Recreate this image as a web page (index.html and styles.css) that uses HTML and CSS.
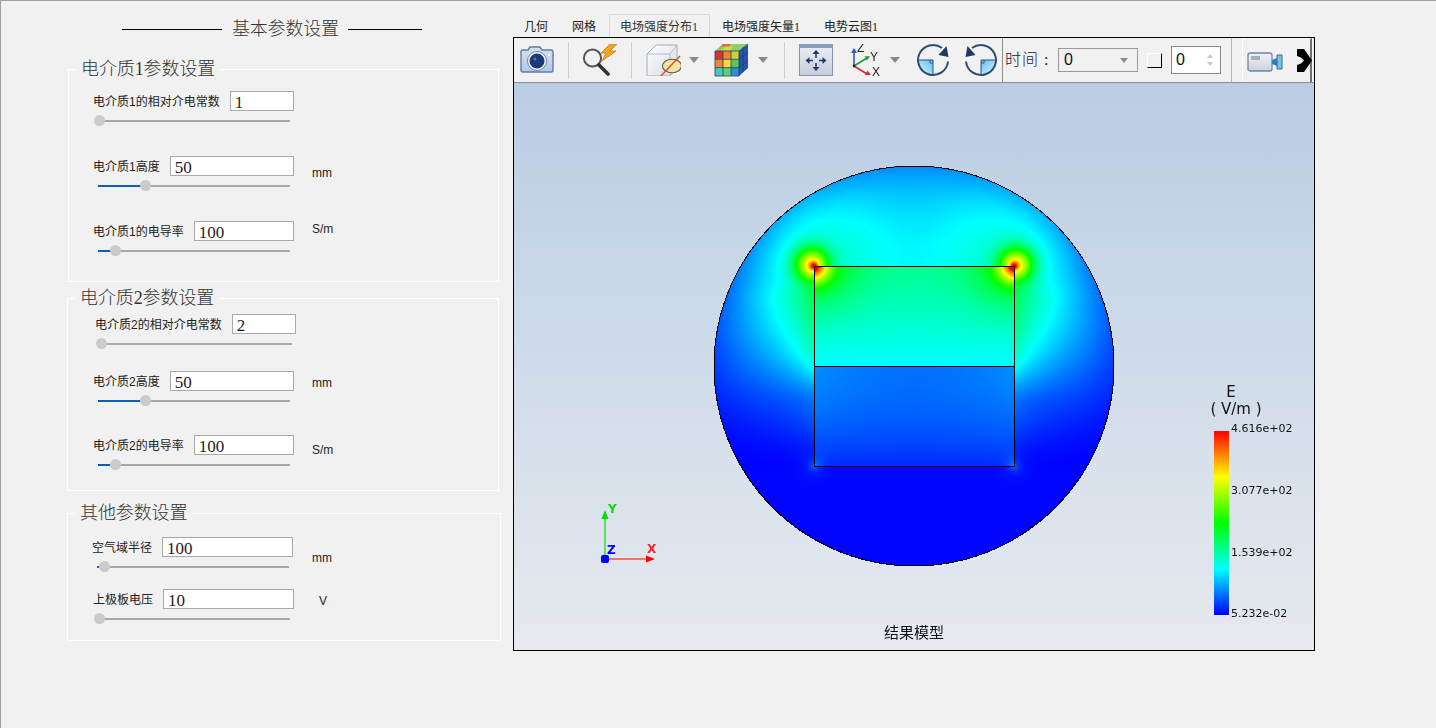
FILE: index.html
```html
<!DOCTYPE html>
<html lang="zh-CN">
<head>
<meta charset="utf-8">
<title>基本参数设置</title>
<link rel="stylesheet" href="styles.css">
</head>
<body>
<div class="app">
  <aside class="params">
    <div class="params-title"><i class="rule rule--left"></i><span>基本参数设置</span><i class="rule rule--right"></i></div>

    <fieldset class="group group--one">
      <legend class="legend">电介质1参数设置</legend>
      <div class="group-body body--one">
        <div class="field gap-29">
          <div class="row"><span class="label">电介质1的相对介电常数</span><div class="input">1</div></div>
          <div class="slider"><b class="handle" style="left:-4px"></b></div>
        </div>
        <div class="field gap-29">
          <div class="row"><span class="label">电介质1高度</span><div class="input">50</div><span class="unit unit--down7">mm</span></div>
          <div class="slider"><b class="fill" style="width:47px"></b><b class="handle" style="left:42px"></b></div>
        </div>
        <div class="field">
          <div class="row"><span class="label">电介质1的电导率</span><div class="input">100</div><span class="unit unit--up2">S/m</span></div>
          <div class="slider"><b class="fill" style="width:17px"></b><b class="handle" style="left:12px"></b></div>
        </div>
      </div>
    </fieldset>

    <fieldset class="group group--two">
      <legend class="legend legend--tight">电介质2参数设置</legend>
      <div class="group-body body--two">
        <div class="field field--shift2 gap-21">
          <div class="row"><span class="label">电介质2的相对介电常数</span><div class="input">2</div></div>
          <div class="slider"><b class="handle" style="left:-4px"></b></div>
        </div>
        <div class="field field--shift0 gap-28">
          <div class="row"><span class="label">电介质2高度</span><div class="input">50</div><span class="unit unit--down2">mm</span></div>
          <div class="slider"><b class="fill" style="width:47px"></b><b class="handle" style="left:42px"></b></div>
        </div>
        <div class="field field--shift0">
          <div class="row"><span class="label">电介质2的电导率</span><div class="input">100</div><span class="unit unit--down5">S/m</span></div>
          <div class="slider"><b class="fill" style="width:17px"></b><b class="handle" style="left:12px"></b></div>
        </div>
      </div>
    </fieldset>

    <fieldset class="group group--three">
      <legend class="legend legend--tight">其他参数设置</legend>
      <div class="group-body body--three">
        <div class="field field--shift-1 gap-16">
          <div class="row"><span class="label">空气域半径</span><div class="input">100</div><span class="unit unit--down11 unit--far1">mm</span></div>
          <div class="slider"><b class="fill" style="width:2px"></b><b class="handle" style="left:2px"></b></div>
        </div>
        <div class="field field--shift0">
          <div class="row"><span class="label">上极板电压</span><div class="input">10</div><span class="unit unit--down2 unit--far2">V</span></div>
          <div class="slider"><b class="handle" style="left:-4px"></b></div>
        </div>
      </div>
    </fieldset>
  </aside>

  <section class="workspace">
    <nav class="tabs">
      <span class="tab">几何</span>
      <span class="tab">网格</span>
      <span class="tab tab--active">电场强度分布1</span>
      <span class="tab">电场强度矢量1</span>
      <span class="tab">电势云图1</span>
    </nav>
    <div class="viewer">
      <div class="toolbar">
        <svg class="icon icon--a" viewBox="0 0 36 32" width="36" height="32">
          <defs><linearGradient id="camBody" x1="0" y1="0" x2="0" y2="1"><stop offset="0" stop-color="#d4e0f0"/><stop offset="1" stop-color="#b4c8e2"/></linearGradient></defs>
          <path d="M4 6h5l2-3h10l2 3h9a2 2 0 0 1 2 2v18a2 2 0 0 1-2 2H4a2 2 0 0 1-2-2V8a2 2 0 0 1 2-2z" fill="url(#camBody)" stroke="#5f7ea6" stroke-width="1.4"/>
          <circle cx="18" cy="17" r="9.500" fill="#eef3fa" stroke="#6a88b0"/>
          <circle cx="18" cy="17" r="7.500" fill="#1d3a78"/>
          <circle cx="16" cy="15" r="1.500" fill="#5a7ab4"/>
          <circle cx="30" cy="11" r="1.200" fill="#ffffff"/>
        </svg>
        <i class="sep sep--13"></i>
        <svg class="icon icon--a" viewBox="0 0 36 32" width="36" height="32">
          <circle cx="10.5" cy="14" r="8.6" fill="#eef1f5" stroke="#555" stroke-width="2"/>
          <path d="M17 21l9 9" stroke="#333" stroke-width="3.6" stroke-linecap="round"/>
          <path d="M28 0L19 9h5l-4 8 14-10h-6l7-7z" fill="#f5a524" stroke="#cf7a10" stroke-width=".8"/>
        </svg>
        <i class="sep sep--13"></i>
        <svg class="icon icon--a" viewBox="0 0 36 32" width="36" height="32">
          <defs><linearGradient id="boxFace" x1="0" y1="0" x2="1" y2="1"><stop offset="0" stop-color="#ffffff"/><stop offset="1" stop-color="#d5d9e0"/></linearGradient></defs>
          <path d="M2 10l9-9h21v22l-7 9H2z" fill="url(#boxFace)" stroke="#a7adb8"/>
          <path d="M2 10h23v22M25 10l7-9" fill="none" stroke="#b4bac4"/>
          <ellipse cx="27" cy="22" rx="9.5" ry="6.8" fill="#f3e4a3" stroke="#5a5a5a" stroke-width="1.1"/>
          <path d="M15 33L35 12" stroke="#d8552b" stroke-width="1.5"/>
        </svg>
        <i class="caret caret--8"></i>
        <svg class="icon icon--b" viewBox="0 0 36 34" width="36" height="34">
          <path d="M25 8l9-7v24l-9 8z" fill="#1f58b0"/>
          <path d="M1 8l8-7h25l-9 7z" fill="#8fcf6a"/>
          <path d="M12 3.500h7l-3 4H7z" fill="#d8d850"/>
          <path d="M9 1h8l-2 2.500H6z" fill="#e86a3c"/>
          <rect x="1" y="8" width="8" height="8.300" fill="#d8352a"/>
          <rect x="9" y="8" width="8" height="8.300" fill="#ef8a2c"/>
          <rect x="17" y="8" width="8" height="8.300" fill="#c7d43e"/>
          <rect x="1" y="16.300" width="8" height="8.300" fill="#ef8a2c"/>
          <rect x="9" y="16.300" width="8" height="8.300" fill="#f3d93a"/>
          <rect x="17" y="16.300" width="8" height="8.300" fill="#58c860"/>
          <rect x="1" y="24.600" width="8" height="8.300" fill="#49c8b4"/>
          <rect x="9" y="24.600" width="8" height="8.300" fill="#5fd078"/>
          <rect x="17" y="24.600" width="8" height="8.300" fill="#2f8ed8"/>
          <path d="M1 8h24v25H1zM9 8v25M17 8v25M1 16.300h24M1 24.600h24M25 8l9-7M25 16l9-7M25 24.600l9-7M29 4.500v24.500" fill="none" stroke="#2b3c58" stroke-width=".8"/>
        </svg>
        <i class="caret caret--8"></i>
        <i class="sep sep--16"></i>
        <svg class="icon icon--a" viewBox="0 0 36 32" width="36" height="32">
          <defs><linearGradient id="fitBody" x1="0" y1="0" x2="0" y2="1"><stop offset="0" stop-color="#eef1f6"/><stop offset="1" stop-color="#c4cbd9"/></linearGradient></defs>
          <rect x="1.500" y=".500" width="33" height="31" fill="url(#fitBody)" stroke="#8593ad"/>
          <rect x="1" y="0" width="34" height="4" fill="#8c9dbd"/>
          <path d="M18 9v5M18 19v5M10 16.500h5M21 16.500h5" stroke="#1f3a64" stroke-width="1.500"/>
          <path d="M18 6l3.500 4h-7zM18 27l3.500-4h-7zM7.500 16.500l4-3.500v7zM28.500 16.500l-4-3.500v7z" fill="#1f3a64"/>
        </svg>
        <svg class="icon icon--c" viewBox="0 0 36 32" width="36" height="32">
          <path d="M4 22V7" stroke="#2a5fc0" stroke-width="1.600"/>
          <path d="M4 4l3 5H1z" fill="#2a5fc0"/>
          <path d="M4 22l13-8" stroke="#1f9a3c" stroke-width="1.600"/>
          <path d="M20 12l-5.500.5 2.500 4z" fill="#1f9a3c"/>
          <path d="M4 22l13 8" stroke="#e0282c" stroke-width="1.600"/>
          <path d="M21 31l-6 0 2.500-4.500z" fill="#e0282c"/>
          <circle cx="4" cy="22" r="1.400" fill="#222"/>
          <text class="axis-letter" x="7" y="8">Z</text>
          <text class="axis-letter" x="20" y="17">Y</text>
          <text class="axis-letter" x="22" y="32">X</text>
        </svg>
        <i class="caret caret--4"></i>
        <svg class="icon icon--d" viewBox="0 0 36 36" width="36" height="36">
          <defs><linearGradient id="rotFill" x1="1" y1="0" x2="0" y2="1"><stop offset="0" stop-color="#5dbdee"/><stop offset="1" stop-color="#e8f6fd"/></linearGradient></defs>
          <path d="M18 18H3a15 15 0 0 0 15 15z" fill="url(#rotFill)" stroke="#2c4e74" stroke-width="1"/>
          <path d="M15 18v3h3" fill="none" stroke="#2c4e74" stroke-width=".8"/>
          <path d="M33 19.500A15 15 0 1 1 27 6" fill="none" stroke="#2c4e74" stroke-width="2"/>
          <path d="M33.500 15l-10-2 8-9z" fill="#1d3a64"/>
        </svg>
        <svg class="icon icon--e icon--flip" viewBox="0 0 36 36" width="36" height="36">
          <path d="M18 18H3a15 15 0 0 0 15 15z" fill="url(#rotFill)" stroke="#2c4e74" stroke-width="1"/>
          <path d="M15 18v3h3" fill="none" stroke="#2c4e74" stroke-width=".8"/>
          <path d="M33 19.500A15 15 0 1 1 27 6" fill="none" stroke="#2c4e74" stroke-width="2"/>
          <path d="M33.500 15l-10-2 8-9z" fill="#1d3a64"/>
        </svg>
        <i class="sep sep--dark"></i>
        <span class="time-label">时间 :</span>
        <div class="combo"><span>0</span><i class="caret caret--combo"></i></div>
        <i class="mini-button"></i>
        <div class="spin"><span>0</span><span class="spin-arrows"><i class="spin-up"></i><i class="spin-down"></i></span></div>
        <i class="sep sep--full"></i>
        <div class="raised">
          <svg class="icon-video" viewBox="0 0 37 24" width="37" height="24">
            <defs><linearGradient id="vidBody" x1="0" y1="0" x2="0" y2="1"><stop offset="0" stop-color="#eef1f6"/><stop offset="1" stop-color="#cdd3de"/></linearGradient></defs>
            <rect x="1" y="4" width="24" height="18" rx="2" fill="url(#vidBody)" stroke="#6d87a8" stroke-width="1.300"/>
            <rect x="4" y="7" width="9" height="4" fill="#a9aeb8"/>
            <path d="M25 11l5-2v8l-5-2z" fill="#2f7fb8"/>
            <path d="M30 6h5v14h-5z" fill="#7fc0e0" stroke="#2f6f9f"/>
          </svg>
          <svg class="icon-more" viewBox="0 0 15 23" width="15" height="23">
            <path d="M0 0h7l8 11.500-8 11.500H0v-7l4-1.500 3-3-3-3-4-1.500z" fill="#000"/>
          </svg>
        </div>
      </div>

      <div class="plot">
        <canvas id="field" class="field-canvas" width="800" height="567"></canvas>

        <svg class="triad" viewBox="0 0 90 70" width="90" height="70">
          <path d="M23 59V17" stroke="#00e000" stroke-width="1.200"/>
          <path d="M23 10l3.500 9h-7z" fill="#00e000"/>
          <path d="M23 59h44" stroke="#ff0000" stroke-width="1.200"/>
          <path d="M73 59l-9 3.500v-7z" fill="#ff0000"/>
          <rect x="19" y="55" width="8" height="8" rx="2" fill="#0000ff"/>
          <text class="triad-letter triad-y" x="26" y="13">Y</text>
          <text class="triad-letter triad-x" x="65" y="53">X</text>
          <text class="triad-letter triad-z" x="25" y="54">Z</text>
        </svg>

        <div class="legend-bar">
          <div class="legend-title"><span class="legend-e">E</span><br>( V/m )</div>
          <div class="bar"></div>
          <span class="tick tick--1">4.616e+02</span>
          <span class="tick tick--2">3.077e+02</span>
          <span class="tick tick--3">1.539e+02</span>
          <span class="tick tick--4">5.232e-02</span>
        </div>
        <div class="caption">结果模型</div>
      </div>
    </div>
  </section>
</div>
<script src="app.js"></script>
</body>
</html>
```
FILE: styles.css
```css
* { box-sizing: border-box; }
html, body { margin: 0; padding: 0; }
body {
  width: 1436px;
  height: 728px;
  overflow: hidden;
  background: #f1f1f1;
  font-family: "Liberation Sans", "Noto Sans CJK SC", sans-serif;
  color: #222;
}
.app {
  display: flex;
  width: 1436px;
  height: 728px;
  border-left: 1px solid #a0a0a0;
  border-top: 1px solid #a0a0a0;
}
.params {
  width: 511px;
  flex: none;
  padding-top: 16px;
}
.params-title {
  display: flex;
  align-items: center;
  height: 24px;
  margin-bottom: 18px;
  font: 300 18px/24px "Liberation Serif", "Noto Sans CJK SC", serif;
  letter-spacing: -.2px;
  color: #333;
}
.rule { display: block; height: 1px; background: #000; }
.rule--left { width: 100px; margin: 0 10px 0 121px; }
.rule--right { width: 74px; margin-left: 9px; }

.group {
  margin: 0;
  padding: 0;
  min-width: 0;
  border: 1px solid #fff;
}
.group--one { width: 431px; margin-left: 67px; }
.group--two { width: 432px; margin-left: 66px; margin-top: 6px; }
.group--three { width: 434px; margin-left: 66px; margin-top: 12px; }
.legend {
  margin-left: 7px;
  padding: 0 5px;
  height: 20px;
  font: 300 18px/20px "Liberation Serif", "Noto Sans CJK SC", serif;
  letter-spacing: -.1px;
  color: #333;
}
.legend--tight { padding: 0 5px 0 5px; }
.group-body { display: flex; flex-direction: column; }
.body--one { padding: 12px 0 24px 25px; }
.body--two { padding: 6px 0 19px 26px; }
.body--three { padding: 14px 0 15px 26px; }

.field { display: flex; flex-direction: column; width: 200px; }
.field--shift2 { margin-left: 2px; }
.field--shift-1 { margin-left: -1px; }
.field--shift0 { margin-left: 0; }
.gap-29 { margin-bottom: 29px; }
.gap-28 { margin-bottom: 28px; }
.gap-21 { margin-bottom: 21px; }
.gap-16 { margin-bottom: 16px; }

.row { display: flex; align-items: center; height: 20px; }
.label { font-size: 12px; line-height: 20px; margin: 2px 10px 0 -1px; white-space: nowrap; color: #222; }
.input {
  flex: 1;
  height: 20px;
  padding-left: 4px;
  background: #fff;
  border: 1px solid #a9a9a9;
  font: 17px/21px "Liberation Serif", serif;
  color: #2a1a20;
}
.unit { flex: none; width: 0; font-size: 12px; line-height: 14px; margin-left: 18px; margin-right: -18px; white-space: nowrap; color: #222; }
.unit--far1 { margin-left: 19px; margin-right: -19px; }
.unit--far2 { margin-left: 25px; margin-right: -25px; }
.unit--down7 { margin-top: 14px; }
.unit--up2 { margin-bottom: 4px; }
.unit--down2 { margin-top: 4px; }
.unit--down5 { margin-top: 10px; }
.unit--down11 { margin-top: 22px; }

.slider {
  position: relative;
  width: 192px;
  height: 2px;
  margin: 9px 0 5px 4px;
  background: #a9a9a9;
}
.fill { position: absolute; left: 0; top: 0; height: 2px; background: #0a62b8; }
.handle {
  position: absolute;
  top: -5px;
  width: 11px;
  height: 11px;
  border-radius: 50%;
  background: #cbcbcb;
}

.workspace { flex: none; width: 803px; padding-top: 13px; }
.tabs { display: flex; height: 23px; }
.tab {
  padding: 0 11px;
  font: 12px/24px "Liberation Serif", "Noto Sans CJK SC", serif;
  color: #222;
  border: 1px solid transparent;
  border-bottom: 0;
}
.tab--active { border-color: #d9d9d9; color: #333; margin-left: 1px; padding-left: 10px; }

.viewer {
  display: flex;
  flex-direction: column;
  width: 802px;
  height: 614px;
  margin-left: 1px;
  border: 1px solid #000;
}
.toolbar {
  position: relative;
  display: flex;
  align-items: center;
  flex: none;
  height: 45px;
  background: #f1f1f1;
  border-bottom: 1px solid #8c8c8c;
}
.icon { flex: none; filter: blur(.3px); }
.icon--a { margin-left: 13px; }
.toolbar > .icon--a:first-child { margin-left: 5px; }
.icon--b { margin-left: 15px; }
.icon--c { margin-left: 16px; }
.icon--d { margin-left: 15px; }
.icon--e { margin-left: 12px; }
.icon--flip { transform: scaleX(-1); }
.axis-letter { font: 12px "Liberation Sans", sans-serif; fill: #222; }

.sep { flex: none; display: block; width: 1px; height: 37px; background: #d0d0d0; }
.sep--13 { margin-left: 13px; }
.sep--16 { margin-left: 16px; }
.sep--dark { margin-left: 3px; height: 44px; background: #8c8c8c; }
.sep--full { margin-left: 10px; height: 44px; background: #b5b5b5; }

.caret {
  flex: none;
  display: block;
  width: 0;
  height: 0;
  border-left: 5.500px solid transparent;
  border-right: 5.500px solid transparent;
  border-top: 6px solid #8a8a8a;
}
.caret--8 { margin-left: 8px; }
.caret--4 { margin-left: 4px; }
.caret--combo { margin-left: auto; margin-right: 9px; border-left-width: 4.500px; border-right-width: 4.500px; border-top-width: 5px; }

.time-label {
  flex: none;
  width: 48px;
  margin-left: 2px;
  font: 300 16px/20px "Liberation Serif", "Noto Sans CJK SC", serif;
  letter-spacing: 1px;
  color: #223;
}
.combo {
  flex: none;
  display: flex;
  align-items: center;
  width: 80px;
  height: 24px;
  margin-left: 5px;
  padding-left: 5px;
  border: 1px solid #9a9a9a;
  font: 16px "Liberation Sans", sans-serif;
  color: #111;
}
.mini-button {
  flex: none;
  display: block;
  width: 15px;
  height: 15px;
  margin-left: 9px;
  border-right: 1px solid #000;
  border-bottom: 1px solid #000;
  border-left: 1px solid #fff;
  border-top: 1px solid #fff;
}
.spin {
  flex: none;
  display: flex;
  align-items: center;
  width: 50px;
  height: 28px;
  margin-left: 9px;
  padding-left: 4px;
  background: #fff;
  border: 1px solid #888;
  font: 16px "Liberation Sans", sans-serif;
  color: #111;
}
.spin-arrows { display: flex; flex-direction: column; gap: 4px; margin-left: auto; margin-right: 7px; }
.spin-up, .spin-down {
  display: block;
  width: 0;
  height: 0;
  border-left: 3.500px solid transparent;
  border-right: 3.500px solid transparent;
}
.spin-up { border-bottom: 4px solid #c8c8c8; }
.spin-down { border-top: 4px solid #c8c8c8; }

.raised {
  flex: none;
  display: flex;
  align-items: center;
  width: 70px;
  height: 44px;
  margin-left: 10px;
  border-left: 1px solid #fff;
  border-top: 1px solid #fff;
  border-right: 2px solid #707070;
}
.icon-video { flex: none; margin-left: 4px; filter: blur(.3px); }
.icon-more { flex: none; margin-left: 13px; margin-top: -1px; filter: blur(.7px); }

.plot {
  position: relative;
  flex: 1;
  background: linear-gradient(180deg, #b9cde4 0%, #e7eaef 100%);
  overflow: hidden;
}
.field-canvas { position: absolute; left: 0; top: 0; }
.triad { position: absolute; left: 68px; top: 417px; }
.triad-letter { font: bold 12px "DejaVu Sans", sans-serif; }
.triad-y { fill: #00e000; }
.triad-x { fill: #ff2020; }
.triad-z { fill: #0000ff; }

.legend-bar { position: absolute; left: 690px; top: 301px; width: 100px; height: 240px; }
.legend-title {
  position: absolute;
  left: 0;
  top: 0;
  width: 64px;
  font: 15px/17px "DejaVu Sans", sans-serif;
  text-align: center;
  color: #111;
  white-space: nowrap;
}
.legend-e { margin-right: 10px; }
.bar {
  position: absolute;
  left: 10px;
  top: 47px;
  width: 15px;
  height: 184px;
  background: linear-gradient(0deg, #0000ff 0%, #00ffff 25%, #00ff00 50%, #ffff00 75%, #ff0000 100%);
}
.tick {
  position: absolute;
  left: 27px;
  font: 11px/13px "DejaVu Sans", sans-serif;
  color: #111;
}
.tick--1 { top: 38px; }
.tick--2 { top: 100px; }
.tick--3 { top: 162px; }
.tick--4 { top: 223px; }
.caption {
  position: absolute;
  left: 370px;
  top: 541px;
  font-size: 15px;
  line-height: 18px;
  color: #111;
}
```
FILE: app.js
```js
(function () {
  var canvas = document.getElementById('field');
  var ctx = canvas.getContext('2d');
  var W = canvas.width, H = canvas.height;
  var img = ctx.createImageData(W, H);
  var CX = 400, CY = 283, R = 200.5;

  function clamp(x, a, b) { return x < a ? a : x > b ? b : x; }
  function smooth(a, b, x) { var t = clamp((x - a) / (b - a), 0, 1); return t * t * (3 - 2 * t); }
  function gauss(x, w) { return Math.exp(-(x * x) / (w * w)); }
  function jet(t) {
    t = clamp(t, 0, 1) * 4;
    var r = 0, g = 0, b = 0;
    if (t < 1) { g = t; b = 1; }
    else if (t < 2) { g = 1; b = 2 - t; }
    else if (t < 3) { r = t - 2; g = 1; }
    else { r = 1; g = 4 - t; }
    return [r * 255, g * 255, b * 255];
  }
  function inner(v) {
    if (v < 0) return 0.25 + 0.11 * clamp(-v, 0, 1);
    return Math.max(0.02, 0.11 - 0.07 * v * v);
  }
  function side(v) {
    var top = 0.25 + 0.11 * clamp(-v, 0, 1);
    var p = top + (0.08 - top) * smooth(-0.15, 0.4, v);
    p *= 1 - smooth(0.4, 1.1, v);
    return p * smooth(-1, -0.65, v);
  }
  function lobe(u, v, wx, wy, cy) {
    var a = gauss(u - 1, wx) * gauss(v - cy, wy);
    var b = gauss(u + 1, wx) * gauss(v - cy, wy);
    return Math.min(1, a + b);
  }
  function value(u, v) {
    var au = Math.abs(u);
    var r = Math.sqrt(u * u + v * v);
    var dc = Math.sqrt((au - 1) * (au - 1) + (v + 1) * (v + 1));
    var dh = Math.sqrt((au - 1.02) * (au - 1.02) + (v + 1.01) * (v + 1.01));
    var dl = Math.sqrt((au - 1) * (au - 1) + (v - 1) * (v - 1));
    var hot = 0.5 * gauss(dh, 0.17) + 0.25 * gauss(dc, 0.04);
    var low = 0.11 * Math.exp(-dl / 0.05);
    var t;
    if (au < 1 && v > -1 && v < 1) {
      t = inner(v);
      if (v < 0) t += 0.15 * gauss(dc, 0.42);
      else t += 0.03 * (1 - v) * au * au;
    } else {
      var edge = 1 - 0.3 * Math.pow(r / 2, 8);
      var fade = 1 - smooth(-0.5, 1.05, v);
      var hx = Math.max(0, au - 1);
      var a = (0.17 + 0.13 * lobe(u, v, 0.9, 0.85, -1.05)) * fade * gauss(hx, 1.4);
      var s = side(v) * Math.exp(-hx / 0.4);
      t = Math.sqrt(a * a + s * s) * edge;
      if (v >= 1) t = Math.max(t, 0.004);
    }
    return t + hot + low;
  }

  for (var y = 0; y < H; y++) {
    for (var x = 0; x < W; x++) {
      var dx = x + 0.5 - CX, dy = y + 0.5 - CY;
      var d = Math.sqrt(dx * dx + dy * dy);
      var i = (y * W + x) * 4;
      if (d > R) continue;
      if (d > R - 1) { img.data[i + 3] = 255; continue; }
      var c = jet(value(dx / 100, dy / 100));
      img.data[i] = c[0]; img.data[i + 1] = c[1]; img.data[i + 2] = c[2]; img.data[i + 3] = 255;
    }
  }
  ctx.putImageData(img, 0, 0);
  ctx.fillStyle = '#000';
  ctx.fillRect(CX - 100, CY - 100, 201, 1);
  ctx.fillRect(CX - 100, CY, 201, 1);
  ctx.fillRect(CX - 100, CY + 100, 201, 1);
  ctx.fillRect(CX - 100, CY - 100, 1, 201);
  ctx.fillRect(CX + 100, CY - 100, 1, 201);
})();
```
